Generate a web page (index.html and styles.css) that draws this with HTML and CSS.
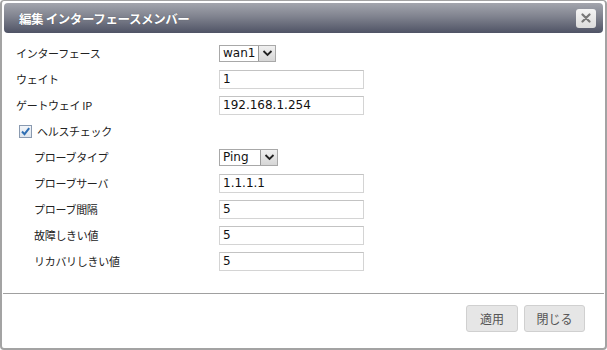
FILE: index.html
```html
<!DOCTYPE html>
<html>
<head>
<meta charset="utf-8">
<link rel="stylesheet" href="styles.css">
</head>
<body>

<div class="dialog">
  <div class="titlebar">
    <span class="title">編集 インターフェースメンバー</span>
    <span class="close">
      <svg width="10" height="10" viewBox="0 0 10 10"><path d="M1.5 1.5 L8.5 8.5 M8.5 1.5 L1.5 8.5" stroke="#777" stroke-width="2.2" stroke-linecap="round"/></svg>
    </span>
  </div>

  <div class="form">
    <div class="row">
      <label>インターフェース</label>
      <div class="select"><span class="val">wan1</span><span class="arrow"><svg width="11" height="8" viewBox="0 0 11 8"><path d="M1.5 2 L5.5 6 L9.5 2" fill="none" stroke="#222" stroke-width="1.8"/></svg></span></div>
    </div>
    <div class="row">
      <label>ウェイト</label>
      <div class="input">1</div>
    </div>
    <div class="row">
      <label>ゲートウェイ IP</label>
      <div class="input">192.168.1.254</div>
    </div>
    <div class="row check">
      <span class="box"><svg width="11" height="11" viewBox="0 0 11 11"><path d="M2 5.5 L4.5 8.2 L9.2 2.2" fill="none" stroke="#2f6fb3" stroke-width="2"/></svg></span>
      <label>ヘルスチェック</label>
    </div>
    <div class="row sub">
      <label>プローブタイプ</label>
      <div class="select ping"><span class="val">Ping</span><span class="arrow"><svg width="11" height="8" viewBox="0 0 11 8"><path d="M1.5 2 L5.5 6 L9.5 2" fill="none" stroke="#222" stroke-width="1.8"/></svg></span></div>
    </div>
    <div class="row sub">
      <label>プローブサーバ</label>
      <div class="input">1.1.1.1</div>
    </div>
    <div class="row sub">
      <label>プローブ間隔</label>
      <div class="input">5</div>
    </div>
    <div class="row sub">
      <label>故障しきい値</label>
      <div class="input">5</div>
    </div>
    <div class="row sub">
      <label>リカバリしきい値</label>
      <div class="input">5</div>
    </div>
  </div>

  <div class="footer">
    <button class="btn apply">適用</button>
    <button class="btn">閉じる</button>
  </div>
</div>

</body>
</html>
```

FILE: styles.css
```css
body {
  margin: 0;
  padding: 0;
  background: #fff;
  font-family: "Noto Sans CJK JP", "DejaVu Sans", sans-serif;
}
.dialog {
  width: 607px;
  height: 350px;
  box-sizing: border-box;
  border: 1px solid #a3a3a3;
  border-width: 1px 2px 2px 2px;
  border-radius: 4px;
  display: flex;
  flex-direction: column;
}
.titlebar {
  margin: 2px 2px 0 2px;
  height: 30px;
  border-radius: 4px;
  background: linear-gradient(#a3a5ad, #80838f 45%, #4f5365);
  display: flex;
  align-items: center;
  justify-content: space-between;
  padding: 0 7px 0 15px;
}
.title {
  color: #fff;
  font-size: 12.5px;
  font-weight: bold;
  letter-spacing: -0.4px;
  text-shadow: 0 0 1px rgba(0,0,0,0.4);
}
.close {
  width: 20px;
  height: 19px;
  border-radius: 3px;
  background: linear-gradient(#f4f4f4, #dcdcdc);
  display: flex;
  align-items: center;
  justify-content: center;
}
.form {
  padding: 7px 0 0 14px;
  flex: 1;
}
.row {
  height: 26px;
  display: flex;
  align-items: center;
  font-size: 11px;
  letter-spacing: -0.3px;
  color: #222;
}
.row label {
  width: 203px;
  flex: none;
}
.row.sub label {
  padding-left: 18px;
  box-sizing: border-box;
}
.row.check label {
  width: auto;
  padding-left: 5px;
}
.box {
  width: 11px;
  height: 11px;
  margin-left: 3px;
  border: 1px solid #8a9ab0;
  background: linear-gradient(#f2f5f9, #dfe6ee);
  display: flex;
  align-items: center;
  justify-content: center;
}
.input {
  width: 145px;
  height: 19px;
  box-sizing: border-box;
  border: 1px solid #d4d4d4;
  border-top-color: #c3c3c3;
  padding-left: 3px;
  font-family: "DejaVu Sans", sans-serif;
  font-size: 12px;
  letter-spacing: 0;
  line-height: 17px;
  color: #111;
}
.select {
  height: 17px;
  box-sizing: border-box;
  border: 1px solid #a8a8a8;
  display: flex;
  align-items: stretch;
  font-family: "DejaVu Sans", sans-serif;
  font-size: 12px;
  letter-spacing: 0;
  color: #111;
}
.select .val {
  padding: 0 3px 0 3px;
  line-height: 15px;
}
.select.ping .val {
  width: 34px;
}
.select .arrow {
  width: 16px;
  background: linear-gradient(#f0f0f0, #d6d6d6);
  border-left: 1px solid #9a9a9a;
  display: flex;
  align-items: center;
  justify-content: center;
}
.footer {
  margin: 0 1px;
  border-top: 1px solid #a0a0a0;
  height: 55px;
  box-sizing: border-box;
  display: flex;
  justify-content: flex-end;
  align-items: flex-start;
  padding: 11px 19px 0 0;
  gap: 6px;
}
.btn {
  height: 27px;
  padding: 0;
  border: 1px solid #d0d0d0;
  border-radius: 3px;
  background: #e6e6e6;
  color: #555;
  font-family: "Noto Sans CJK JP", sans-serif;
  font-size: 12px;
  width: 61px;
}
.btn.apply {
  width: 52px;
}
```
